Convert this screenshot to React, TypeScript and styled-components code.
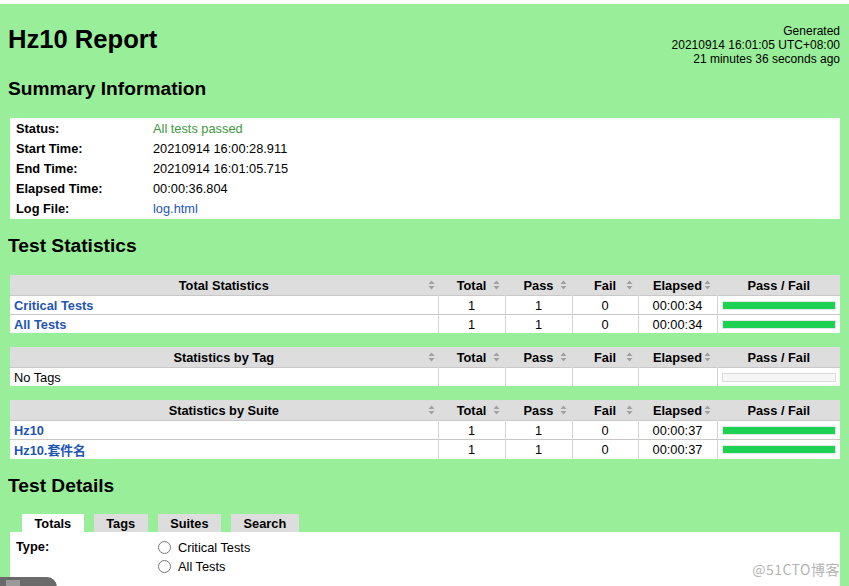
import React from 'react';
import styled, { createGlobalStyle } from 'styled-components';

const GlobalStyle = createGlobalStyle`
  html, body {
    margin: 0;
    padding: 0;
    overflow: hidden;
    background: #ffffff;
  }

  body {
    font-family: "Liberation Sans", Arial, "Noto Sans CJK SC", sans-serif;
    font-size: 12.8px;
    color: #000;
  }
`;

interface StatRow {
  name: string
  total?: number
  pass?: number
  fail?: number
  elapsed?: string
  link?: boolean
}

interface StatTableProps {
  title: string
  rows: StatRow[]
}

const Page = styled.div`
  position: relative;
  margin-top: 4px;
  min-height: 640px;
  background: #99ee99;
  padding: 20px 9px 0 8px;
`;

const Header = styled.div`
  display: flex;
  justify-content: space-between;
  align-items: flex-start;
`;

const Title = styled.h1`
  margin: 0;
  font-size: 25.6px;
  font-weight: bold;
  line-height: 29px;
  padding-top: 1px;
`;

const Generated = styled.div`
  text-align: right;
  font-size: 12px;
  line-height: 14px;
`;

const SectionTitle = styled.h2<{ $top: number, $bottom: number }>`
  margin: ${(p) => p.$top}px 0 ${(p) => p.$bottom}px;
  font-size: 19.2px;
  font-weight: bold;
  line-height: 22px;
`;

const SummaryTable = styled.table`
  margin-left: 2px;
  width: calc(100% - 2px);
  background: #fff;
  border-collapse: collapse;
  border-bottom: 1px solid #fff;

  th {
    width: 131px;
    height: 20px;
    padding: 0 0 0 6px;
    text-align: left;
    font-weight: bold;
  }

  td {
    height: 20px;
    padding: 0 0 0 6px;
  }
`;

const Passed = styled.span`
  color: #3d9a3d;
`;

const Link = styled.a<{ $bold?: boolean }>`
  color: #1f55b3;
  text-decoration: none;
  font-weight: ${(p) => (p.$bold ? 'bold' : 'normal')};
`;

const Stats = styled.table`
  margin: 0 0 14px 2px;
  width: calc(100% - 2px);
  border-collapse: collapse;
  table-layout: fixed;
  background: #fff;
`;

const HeadCell = styled.th`
  position: relative;
  height: 20px;
  padding: 0;
  background: #dddddd;
  font-weight: bold;
  text-align: center;
  border-left: 1px solid #dddddd;

  &:first-child {
    border-left: none;
  }
`;

const Cell = styled.td<{ $align?: string }>`
  height: 18px;
  padding: 0 4px;
  text-align: ${(p) => p.$align || 'center'};
  border-top: 1px solid #c8c8c8;
  border-left: 1px solid #d4d4d4;
  white-space: nowrap;

  &:first-child {
    border-left: none;
  }
`;

const SortMark = styled.svg<{ $right: number }>`
  position: absolute;
  right: ${(p) => p.$right}px;
  top: 5px;
`;

const Graph = styled.div<{ $empty?: boolean }>`
  height: 7px;
  border: 1px solid ${(p) => (p.$empty ? '#dcdcdc' : '#e6e6e6')};
  background: ${(p) => (p.$empty ? '#f6f6f6' : '#1dd152')};
`;

const Tabs = styled.div`
  display: flex;
  margin: 0 0 0 2px;
  padding-left: 12px;
`;

const Tab = styled.div<{ $active?: boolean }>`
  height: 18px;
  line-height: 19px;
  padding: 0 12.5px;
  margin-right: 10px;
  font-weight: bold;
  background: ${(p) => (p.$active ? '#ffffff' : '#dddddd')};
`;

const Panel = styled.table`
  margin-left: 2px;
  width: calc(100% - 2px);
  background: #fff;
  border-collapse: collapse;

  th {
    width: 137px;
    padding: 7px 0 0 6px;
    text-align: left;
    vertical-align: top;
    font-weight: bold;
  }

  td {
    padding: 6px 0 60px 0;
    vertical-align: top;
  }
`;

const Choice = styled.label`
  display: flex;
  align-items: center;
  height: 19px;
  color: #000;

  input {
    margin: 0 7px 0 5px;
    width: 13px;
    height: 13px;
  }
`;

const Watermark = styled.div`
  position: absolute;
  right: 9px;
  top: 555px;
  font-family: "Noto Sans CJK SC", "Liberation Sans", sans-serif;
  font-size: 14px;
  letter-spacing: 0.5px;
  color: #b4b4b4;
`;

const Corner = styled.div`
  position: absolute;
  left: 0;
  top: 573px;
  width: 57px;
  height: 12px;
  background: #6a6a6a;
  border-top-right-radius: 10px;

  &::before {
    content: '';
    position: absolute;
    left: 6px;
    top: 3px;
    width: 14px;
    height: 9px;
    background: #9a9a9a;
  }
`;

function Sorter ({ right }: { right: number }) {
  return (
    <SortMark $right={right} width='7' height='10' viewBox='0 0 7 10'>
      <polygon points='0.5,4 3.5,0.5 6.5,4' fill='#a0a0a0' />
      <polygon points='0.5,6 3.5,9.5 6.5,6' fill='#a0a0a0' />
    </SortMark>
  );
}

function StatTable ({ title, rows }: StatTableProps) {
  return (
    <Stats>
      <colgroup>
        <col style={{ width: '428px' }} />
        <col style={{ width: '67px' }} />
        <col style={{ width: '67px' }} />
        <col style={{ width: '66px' }} />
        <col style={{ width: '79px' }} />
        <col />
      </colgroup>
      <thead>
        <tr>
          <HeadCell>{title}<Sorter right={3} /></HeadCell>
          <HeadCell>Total<Sorter right={5} /></HeadCell>
          <HeadCell>Pass<Sorter right={5} /></HeadCell>
          <HeadCell>Fail<Sorter right={5} /></HeadCell>
          <HeadCell>Elapsed<Sorter right={6} /></HeadCell>
          <HeadCell>Pass / Fail</HeadCell>
        </tr>
      </thead>
      <tbody>
        {rows.map((row) => (
          <tr key={row.name}>
            <Cell $align='left'>
              {row.link ? <Link $bold href='#'>{row.name}</Link> : row.name}
            </Cell>
            <Cell>{row.total}</Cell>
            <Cell>{row.pass}</Cell>
            <Cell>{row.fail}</Cell>
            <Cell>{row.elapsed}</Cell>
            <Cell>
              <Graph $empty={row.total === undefined} />
            </Cell>
          </tr>
        ))}
      </tbody>
    </Stats>
  );
}

const totalRows: StatRow[] = [
  { name: 'Critical Tests', total: 1, pass: 1, fail: 0, elapsed: '00:00:34', link: true },
  { name: 'All Tests', total: 1, pass: 1, fail: 0, elapsed: '00:00:34', link: true }
];

const tagRows: StatRow[] = [
  { name: 'No Tags' }
];

const suiteRows: StatRow[] = [
  { name: 'Hz10', total: 1, pass: 1, fail: 0, elapsed: '00:00:37', link: true },
  { name: 'Hz10.套件名', total: 1, pass: 1, fail: 0, elapsed: '00:00:37', link: true }
];

export default function App () {
  return (
    <>
      <GlobalStyle />
      <Page>
        <Header>
          <Title>Hz10 Report</Title>
          <Generated>
            Generated<br />
            20210914 16:01:05 UTC+08:00<br />
            21 minutes 36 seconds ago
          </Generated>
        </Header>

        <SectionTitle $top={12} $bottom={18}>Summary Information</SectionTitle>
        <SummaryTable>
          <tbody>
            <tr><th>Status:</th><td><Passed>All tests passed</Passed></td></tr>
            <tr><th>Start Time:</th><td>20210914 16:00:28.911</td></tr>
            <tr><th>End Time:</th><td>20210914 16:01:05.715</td></tr>
            <tr><th>Elapsed Time:</th><td>00:00:36.804</td></tr>
            <tr><th>Log File:</th><td><Link href='#'>log.html</Link></td></tr>
          </tbody>
        </SummaryTable>

        <SectionTitle $top={16} $bottom={18}>Test Statistics</SectionTitle>
        <StatTable title='Total Statistics' rows={totalRows} />
        <StatTable title='Statistics by Tag' rows={tagRows} />
        <StatTable title='Statistics by Suite' rows={suiteRows} />

        <SectionTitle $top={16} $bottom={17}>Test Details</SectionTitle>
        <Tabs>
          <Tab $active>Totals</Tab>
          <Tab>Tags</Tab>
          <Tab>Suites</Tab>
          <Tab>Search</Tab>
        </Tabs>
        <Panel>
          <tbody>
            <tr>
              <th>Type:</th>
              <td>
                <Choice><input type='radio' name='type' />Critical Tests</Choice>
                <Choice><input type='radio' name='type' />All Tests</Choice>
              </td>
            </tr>
          </tbody>
        </Panel>

        <Watermark>@51CTO博客</Watermark>
        <Corner />
      </Page>
    </>
  );
}
